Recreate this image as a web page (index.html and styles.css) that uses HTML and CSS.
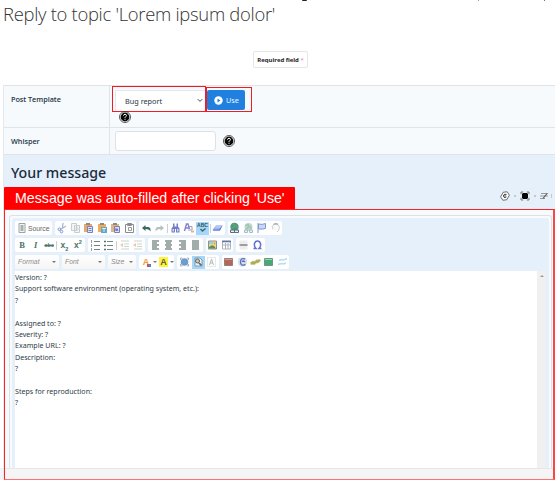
FILE: index.html
```
<!DOCTYPE html>
<html lang="en">
<head>
<meta charset="utf-8">
<title>Reply to topic</title>
<link rel="stylesheet" href="styles.css">
</head>
<body>
<div class="cutoff"><i class="descender"></i><i class="tick tick-blue"></i><i class="tick"></i></div>
<h1><span>Reply to topic 'Lorem ipsum dolor'</span></h1>
<div class="required">Required field <b>*</b></div>
<main class="form">
  <div class="row row-template">
    <div class="label">Post Template</div>
    <div class="field">
      <div class="controls">
        <div class="select mark"><span>Bug report</span><svg width="6" height="5" viewBox="0 0 6 5"><path d="M.8 1.2 3 3.4 5.2 1.2" fill="none" stroke="#333" stroke-width=".9"/></svg></div>
        <div class="use-wrap mark"><button class="use"><svg width="9" height="9" viewBox="0 0 9 9"><circle cx="4.5" cy="4.5" r="4.2" fill="#fff"/><path d="M3.5 2.4v4.2l3-2.1z" fill="#2080e0"/></svg>Use</button></div>
      </div>
      <svg class="help" width="12" height="12" viewBox="0 0 12 12"><circle cx="6" cy="6" r="5.5" fill="#fff" stroke="#111" stroke-width=".7"/><circle cx="6" cy="6" r="4.4" fill="#080808"/><path d="M4.5 4.7q.1-1.4 1.5-1.4t1.5 1.3Q7.5 5.4 6.500 5.800 6 6.100 6 6.900M6 7.800v1" fill="none" stroke="#fff"/></svg>
    </div>
  </div>
  <div class="row row-whisper">
    <div class="label">Whisper</div>
    <div class="field whisper-field"><div class="input"></div>
      <svg width="12" height="12" viewBox="0 0 12 12"><circle cx="6" cy="6" r="5.5" fill="#fff" stroke="#111" stroke-width=".7"/><circle cx="6" cy="6" r="4.4" fill="#080808"/><path d="M4.5 4.7q.1-1.4 1.5-1.4t1.5 1.3Q7.5 5.4 6.500 5.800 6 6.100 6 6.900M6 7.800v1" fill="none" stroke="#fff"/></svg>
    </div>
  </div>
  <section class="message">
    <h2>Your message</h2>
    <div class="callout-row">
      <div class="callout"><span>Message was auto-filled after clicking 'Use'</span></div>
      <div class="tools">
        <svg width="10" height="10" viewBox="0 0 10 10"><path d="M3.300 1.200 7.200.8 9.400 4.200 6.700 8.800 2.800 9.200.6 5.800z" fill="#fff" stroke="#333" stroke-width=".7"/><path d="M6.600 3.700Q4.700 2.500 3.700 4q-.7 1.500.5 2.400Q5.500 7 6.400 6M4.200 5h1.800" fill="none" stroke="#222" stroke-width=".9"/></svg>
        <i></i>
        <svg width="10" height="10" viewBox="0 0 10 10"><path d="M1 3.200V1h2.200M6.800 1H9v2.200M9 6.800V9H6.800M3.200 9H1V6.800" fill="none" stroke="#777"/><path d="M3 2h4l1 1v4L7 8H3L2 7V3z" fill="#050505"/></svg>
        <i></i>
        <svg width="9" height="10" viewBox="0 0 9 10"><path d="M1 2.500h7M0 5h8M0 7.500h5" stroke="#999" stroke-width="1.100"/><path d="m3 7.500 4-5" stroke="#555" stroke-width="1.100"/></svg>
        <b></b>
      </div>
    </div>
    <div class="frame">
      <div class="editor-shell"><div class="editor">
        <div class="bar">
          <div class="group source"><svg width="11" height="10" viewBox="0 0 11 10"><path d="M2 .5h6v9H2z" fill="#f5f5f5" stroke="#9aa5a5"/><path d="M3.500 3h3M3.500 5h3M3.500 7h3" stroke="#55706c"/></svg><span>Source</span></div>
          <div class="group g81">
            <svg viewBox="0 0 13 12"><path d="m8 1-.7 6M11 4 5.500 7.500" stroke="#a5bbce" stroke-width="1.300"/><circle cx="4.300" cy="7.200" r="1.300" fill="none" stroke="#8794dc"/><circle cx="6.500" cy="9.600" r="1.300" fill="none" stroke="#8794dc"/></svg>
            <svg viewBox="0 0 13 12"><path d="M2.500 1.500h5v7h-5zM5.500 3.500h5v7h-5z" fill="#f4f5f7" stroke="#c6cccf"/><path d="M6.500 6h3M6.500 8h3" stroke="#c8cdd2"/></svg>
            <svg viewBox="0 0 13 12"><path d="M2 2h8v8H2z" fill="#e8a869"/><path d="M4 1h4v2H4z" fill="#8a8a88"/><path d="M5.500 4.500h5v6h-5z" fill="#dde3ff" stroke="#7a83b9"/><path d="M6.500 6.500h3M6.500 8.500h3" stroke="#7a83b9"/></svg>
            <svg viewBox="0 0 13 12"><path d="M2 2h8v8H2z" fill="#f0ad58"/><path d="M4 1h4v2H4z" fill="#8a8a88"/><path d="M5 5h6v6H5z" fill="#62a4ca"/><path d="M6 6.500h4M8 6.500V10" stroke="#d5eefa"/></svg>
            <svg viewBox="0 0 13 12"><path d="M2 2h8v8H2z" fill="#deb489"/><path d="M4 1h4v2H4z" fill="#8a8a88"/><path d="M5.500 4.500h5v6h-5z" fill="#dde3ff" stroke="#7881ae"/><path d="m6.500 6.500.7 2.500L8 6.500 9 9" fill="none" stroke="#6572a8"/></svg>
            <svg viewBox="0 0 13 12"><path d="M2.500 2.500h8v8h-8zM4.500 1.500h4v2h-4z" fill="#fff" stroke="#8a8a8a"/><path d="M5.500 5.500h3v3h-3z" fill="none" stroke="#999"/></svg>
          </div>
          <div class="group g86">
            <svg viewBox="0 0 13 12"><path d="m2 6 3.500-3v2H8.500q2.500.5 2 4.500Q9.500 7 5.500 7v2z" fill="#3d6964"/></svg>
            <svg viewBox="0 0 13 12"><path d="M11 6 7.500 3v2H4.500q-2.500.5-2 4.500Q3.500 7 7.500 7v2z" fill="#b1c3c0"/></svg>
            <i></i>
            <svg viewBox="0 0 13 12"><path d="M4 1.500h1.500v3h2v-3H9v3l1.500 2v4h-3.500V7H6v3.500H2.500v-4l1.500-2z" fill="#737cc6"/><path d="M3.500 7H5v2.500H3.500zM8 7h1.500v2.500H8z" fill="#cdd5ff"/></svg>
            <svg viewBox="0 0 13 12"><path d="m2.500 9 2-7h1.500l1.500 5M3 6h4" fill="none" stroke="#8183cc" stroke-width="1.400"/><path d="M7 4.500h3v3.500H6" fill="none" stroke="#9a9dcc"/><path d="M9 8.500h3v2H9z" fill="#efad91"/></svg>
            <span class="on abc"><em>ABC</em><svg viewBox="0 0 13 5"><path d="m4.500 1 2 2 3-2.500" fill="none" stroke="#3e6968" stroke-width="1.500"/></svg></span>
            <i></i>
            <svg viewBox="0 0 13 12"><path d="m1.500 8 3.500-4.500h6.500L8.500 9h-6z" fill="#839ce5"/><path d="M5 3.500h6.500L9 6.500H3z" fill="#b4c7f5"/><path d="m11.500 3.500-3 5.500V7z" fill="#455fb4"/></svg>
          </div>
          <div class="group g54">
            <svg viewBox="0 0 13 12"><circle cx="6.500" cy="5" r="4.200" fill="#4594a2"/><path d="M3.500 3q3-3 3 0t-3 3m4-3 2 3" fill="none" stroke="#69a74f" stroke-width="1.500"/><path d="M2.500 8h4v2.500h-4zM6.500 8h4v2.500h-4z" fill="#eee" stroke="#54717d"/></svg>
            <svg viewBox="0 0 13 12"><circle cx="6.500" cy="5" r="4" fill="#bbd7e5"/><path d="M3.500 4q3-3 3 0t-3 3m4-3 2 3" fill="none" stroke="#a5c899" stroke-width="1.500"/><path d="M2.500 8h3v2.500h-3zM7.500 8h3v2.500h-3z" fill="#eee" stroke="#a9bbc2"/></svg>
            <svg viewBox="0 0 13 12"><path d="M3 1v10" stroke="#849fba"/><path d="M3.500 2q3.500 1 7-.5v5q-3.500 1-7 .5z" fill="#c9d7fa" stroke="#8298d2"/></svg>
            <svg viewBox="0 0 13 12"><path d="M4 7.500Q2 4 5 2.500q5-1 5.500 3Q10 9 8 10" fill="#fafafa" stroke="#ccc"/><path d="M4.500 2.500Q7 .8 9 2.500" fill="none" stroke="#aaa" stroke-width="1.300"/></svg>
          </div>
        </div>
        <div class="bar">
          <div class="group g70">
            <span class="glyph bold">B</span><span class="glyph ital">I</span><span class="glyph strike">abc</span><i></i><span class="glyph">x<sub>2</sub></span><span class="glyph">x<sup>2</sup></span>
          </div>
          <div class="group g57">
            <svg viewBox="0 0 13 12"><path d="M5 2.500h6M5 6.500h6M5 10.500h6" stroke="#6e8783"/><path d="M2.500 1v3M2.500 5v3M2.500 9v3" stroke="#90a39f"/></svg>
            <svg viewBox="0 0 13 12"><path d="M5 2.500h6M5 6.500h6M5 10.500h6" stroke="#6e8783"/><path d="M2 2.500h2M2 6.500h2M2 10.500h2" stroke="#4f756f" stroke-width="1.600"/></svg>
            <i></i>
            <svg viewBox="0 0 13 12"><path d="M3 2h8M6 5h5M6 7.500h5M3 10h8" stroke="#cbd5d3"/><path d="m2 6 3-2v4z" fill="#f3c6a6"/></svg>
            <svg viewBox="0 0 13 12"><path d="M3 2h8M6 5h5M6 7.500h5M3 10h8" stroke="#cbd5d3"/><path d="m2 6 3-2v4z" fill="#f3c6a6"/></svg>
          </div>
          <div class="group g55">
            <svg viewBox="0 0 13 12"><path d="M3 2h7M3 4h5M3 6h7M3 8h5M3 10h7" stroke="#81928f" stroke-width="1.300"/></svg>
            <svg viewBox="0 0 13 12"><path d="M3 2h7M4 4h5M3 6h7M4 8h5M3 10h7" stroke="#81928f" stroke-width="1.300"/></svg>
            <svg viewBox="0 0 13 12"><path d="M3 2h7M5 4h5M3 6h7M5 8h5M3 10h7" stroke="#81928f" stroke-width="1.300"/></svg>
            <svg viewBox="0 0 13 12"><path d="M3 2h7M3 4h7M3 6h7M3 8h7M3 10h7" stroke="#81928f" stroke-width="1.300"/></svg>
          </div>
          <div class="group g27">
            <svg viewBox="0 0 13 12"><path d="M2.500 2h8v8h-8z" fill="#efd98b" stroke="#7d969a"/><path d="M3 8q4-4 7 1.500H3z" fill="#658d57"/><path d="M3 3h4v2H3z" fill="#9ccbd9"/><circle cx="8.500" cy="4.500" r="1" fill="#f88e55"/></svg>
            <svg viewBox="0 0 13 12"><path d="M2.500 2h8v8h-8zM2.500 6h8M5.500 4v6M8 4v6" fill="#fff" stroke="#adb5bd"/><path d="M2 2.500h9" stroke="#6477a8" stroke-width="1.600"/></svg>
          </div>
          <div class="group g29">
            <svg viewBox="0 0 13 12"><path d="M2.500 1.500h8v9h-8z" fill="#ededed"/><path d="M2.500 6h8" stroke="#848c8b" stroke-width="1.600"/></svg>
            <svg viewBox="0 0 13 12"><path d="M2.500 9.500h2.500Q2.800 7 3.500 4.500T6.500 2t3 2.500-1.500 5h2.500" fill="none" stroke="#6170d2" stroke-width="1.500"/></svg>
          </div>
        </div>
        <div class="bar">
          <div class="group combo format"><span>Format</span><u></u></div>
          <div class="group combo font"><span>Font</span><u></u></div>
          <div class="group combo size"><span>Size</span><u></u></div>
          <div class="group colors"><span class="text-color">A<b></b></span><u></u><span class="bg-color">A</span><u></u></div>
          <div class="group g42">
            <svg viewBox="0 0 13 12"><path d="M2.500 2h2M9 2h1.500v2M10.500 8v2H9M4.500 10h-2V8M2.500 4V2" stroke="#a2b1bf" fill="none"/><circle cx="6.500" cy="6" r="3.800" fill="#6f9ccf"/></svg>
            <span class="on"><svg viewBox="0 0 13 12"><path d="M3 2h5l2 2v6H3z" fill="#f0f4f5" stroke="#85999f"/><circle cx="5.500" cy="5" r="2" fill="#c1c9ca" stroke="#59686a"/><path d="m7 7 2.500 2.500" stroke="#59686a" stroke-width="1.700"/></svg></span>
            <svg viewBox="0 0 13 12"><path d="M2.500 1.500h8v9h-8z" fill="none" stroke="#d0d5d3" stroke-dasharray="1 1"/><path d="m4.500 9 2-6 2 6M5 7h3" fill="none" stroke="#b3baba"/></svg>
          </div>
          <div class="group g67">
            <svg viewBox="0 0 13 12"><path d="M2.500 2.500h8v7h-8z" fill="#b5665b" stroke="#9a7c78"/><path d="M3 3.500h7" stroke="#d99790"/></svg>
            <svg viewBox="0 0 13 12"><path d="M2 3 4 1.500h5l2 2v4L8 10.500H4L2 8z" fill="#d5e3ee"/><path d="M9 3Q4.500 1.500 4.500 6t5 2.500M6.500 6q0-2 2.500 0" fill="none" stroke="#626ebb" stroke-width="1.400"/></svg>
            <svg viewBox="0 0 13 12"><path d="M1.500 6.500 4 5l2 .5L7 4l4-.5.5 1.500L9 7H7L6 8.500H2z" fill="#aaad55" stroke="#c5c37e" stroke-width=".6"/></svg>
            <svg viewBox="0 0 13 12"><path d="M2.500 2.500h8v7h-8z" fill="#4aa779" stroke="#669b80"/><path d="M3 3.500h7" stroke="#91d7ac"/></svg>
            <svg viewBox="0 0 13 12"><path d="m3 4.500 2.500-1 2 .5L11 2.500M2 8.500l3.500-1 2 .5L10 7" fill="none" stroke="#b6ddf2" stroke-width="1.500"/></svg>
          </div>
        </div>
        <div class="document"><div class="text">Version: ?<br>Support software environment (operating system, etc.):<br>?<br><br>Assigned to: ?<br>Severity: ?<br>Example URL: ?<br>Description:<br>?<br><br>Steps for reproduction:<br>?</div><div class="scroll"><b></b></div></div>
      </div></div>
      <div class="status"></div>
    </div>
  </section>
</main>
</body>
</html>
```
FILE: styles.css
```
* { box-sizing: border-box; }
body { margin: 0; width: 555px; height: 480px; overflow: hidden; background: linear-gradient(#f5f5f5, #f5f5f5) 0 468px / 5px 12px no-repeat #fff; color: #253646; font-family: "Noto Sans", sans-serif; display: flex; flex-direction: column; }
svg { display: block; flex: none; }
.cutoff { height: 1px; display: flex; padding-left: 302px; }
.descender { width: 5px; height: 1px; background: #222; border-radius: 0 0 3px 3px; }
.tick { width: 1px; height: 1px; background: #777; margin-left: 65px; }
.tick-blue { background: #79a2bf; margin-left: 171px; }
h1 { margin: 0; height: 50px; padding-left: 3px; font: 300 18.4px/26px "Open Sans", sans-serif; letter-spacing: -.28px; color: #333; white-space: nowrap; }
.required { width: 55px; height: 17px; flex: none; margin-left: 253px; border: 1px solid #e4e6e8; border-radius: 2px; text-align: center; font: 700 6px/16px "Open Sans", sans-serif; letter-spacing: -.03px; color: #222; white-space: nowrap; }
.required b { color: #e77b83; font-weight: 400; }
.form { margin: 17px 0 0 3px; height: 395px; flex: none; border-left: 1px solid #e3e9ef; border-top: 1px solid #dfe4e9; }
.row { display: flex; background: #f7fafd; border-bottom: 1px solid #dfe4e9; }
.row-template { height: 42px; }
.row-whisper { height: 27px; }
.label { width: 106px; border-right: 1px solid #dfe4e9; padding: 7px 0 0 7px; font: 600 7.3px/12px "Open Sans", sans-serif; letter-spacing: -.05px; }
.row-whisper .label { padding-top: 7px; }
.field { flex: 1; padding-left: 2px; }
.controls { display: flex; height: 25px; }
.mark { border: 1px solid #ee1c24; }
.select { width: 94px; height: 26px; margin-top: 0; background: #fff; display: flex; justify-content: space-between; align-items: center; padding: 3px 2px 0 12px; font: 7.3px/12px "Noto Sans", sans-serif; box-shadow: inset 2px 3px 0 #f7fafd, inset 3px 4px 0 #e5e8ec; }
.use-wrap { width: 46px; height: 25px; margin-top: 1px; padding: 2px 6px 2px 0; }
.use { width: 38px; height: 20px; border: 0; border-radius: 2px; padding: 0 6px 0 7px; background: #2080e0; color: #edf6ff; display: flex; align-items: center; gap: 3px; font: 7.3px/12px "Noto Sans", sans-serif; }
.help { margin: 0 0 0 7px; }
.whisper-field { display: flex; align-items: center; gap: 7px; padding: 0 0 0 5px; }
.input { width: 101px; height: 20px; border: 1px solid #dce2e8; border-radius: 3px; background: #fff; }
.message { background: #e6f0fa; height: 325px; }
h2 { margin: 0; padding: 6px 0 0 7px; height: 32px; font: 600 14.2px/23px "Noto Sans", sans-serif; font-weight: 500; color: #182b40; }
.callout-row { display: flex; height: 22px; justify-content: space-between; }
.callout { width: 291px; background: #f00; color: #fff; border-radius: 1px 1px 0 0; padding-left: 11px; font: 14.2px/22px "Liberation Sans", sans-serif; white-space: nowrap; }
.tools { display: flex; align-items: center; gap: 4px; padding: 0 3px 4px 0; }
.tools i { width: 2px; height: 2px; background: #c2c8cf; }
.tools b { width: 1px; height: 4px; background: #c2c8cf; margin-left: -2px; }
.frame { width: 551px; height: 271px; border: 1px solid #f22; border-bottom-color: #ff7272; border-right: 2px solid #f44; background: #f8fbfd; padding: 5px 0 0 4px; display: flex; flex-direction: column; }
.editor-shell { height: 253px; width: 543px; border: 1px solid #dbe1e7; border-bottom: 0; border-radius: 3px 3px 0 0; padding: 2px 2px 0; background: #f8fbfd; }
.editor { height: 250px; background: #e5f0fb; padding: 3px 0 0 3px; border-radius: 2px; display: flex; flex-direction: column; gap: 3px; }
.bar { display: flex; gap: 3px; height: 14px; flex: none; }
.group { display: flex; align-items: center; justify-content: space-evenly; background: #fff; border-radius: 2px; height: 14px; flex: none; }
.group > svg { width: 13px; height: 12px; }
.group > i { width: 1px; height: 9px; background: #cad0d5; flex: none; }
.source { width: 37px; gap: 0; padding-left: 2px; justify-content: flex-start; font: 6.8px/13px "Liberation Sans", sans-serif; color: #666; }
.source > svg { width: 11px; height: 10px; }
.g81 { width: 81px; }
.g86 { width: 86px; }
.g54 { width: 54px; }
.g70 { width: 70px; }
.g57 { width: 57px; }
.g55 { width: 55px; }
.g27 { width: 27px; }
.g29 { width: 29px; }
.g42 { width: 42px; }
.g67 { width: 67px; }
.on { width: 13px; height: 13px; background: #a6d7fb; display: block; }
.on svg { width: 13px; height: 12px; }
.abc em { display: block; font: 700 5px/6px "Liberation Sans", sans-serif; color: #2c5353; text-align: center; }
.abc svg { height: 5px; }
.glyph { width: 13px; text-align: center; font: 700 8.5px/13px "Liberation Sans", sans-serif; color: #49736d; white-space: nowrap; }
.glyph sub, .glyph sup { font-size: 5.5px; line-height: 0; }
.bold { font-family: "Liberation Serif", serif; }
.ital { font-family: "Liberation Serif", serif; font-style: italic; }
.strike { font-size: 5.5px; text-decoration: line-through; }
.combo { color: #8c8c8c; font: italic 6.8px/14px "Liberation Sans", sans-serif; padding: 0 3px; justify-content: space-between; background: linear-gradient(#fff, #f5f5f5); }
.format { width: 44px; }
.font { width: 43px; }
.size { width: 28px; }
u { display: block; width: 0; height: 0; border-left: 2px solid transparent; border-right: 2px solid transparent; border-top: 2px solid #777; flex: none; }
.colors { width: 35px; gap: 2px; padding: 0 2px; justify-content: flex-start; }
.text-color, .bg-color { width: 10px; height: 10px; font: 700 9px/10px "Liberation Sans", sans-serif; color: #f29b32; text-align: center; flex: none; }
.bg-color { width: 9px; background: #fff43b; color: #53604c; }
.text-color { position: relative; }
.text-color b { position: absolute; right: 0; bottom: 0; width: 4px; height: 3px; background: linear-gradient(90deg, #e44 50%, #48c 50%); }
.document { display: flex; flex: 1; margin-top: -1px; background: #fff; margin-right: 3px; }
.text { flex: 1; padding: 1px 0 0; font: 7.1px/11.4px "Noto Sans", sans-serif; color: #303c48; }
.scroll { width: 9px; background: #f0f0f0; padding: 4px 0 0 3px; }
.scroll b { display: block; width: 0; height: 0; border-left: 2px solid transparent; border-right: 2px solid transparent; border-bottom: 2px solid #999; }
.status { flex: 1; margin-left: -4px; background: #f5f5f5; border-top: 1px solid #e7e7e7; }
```
